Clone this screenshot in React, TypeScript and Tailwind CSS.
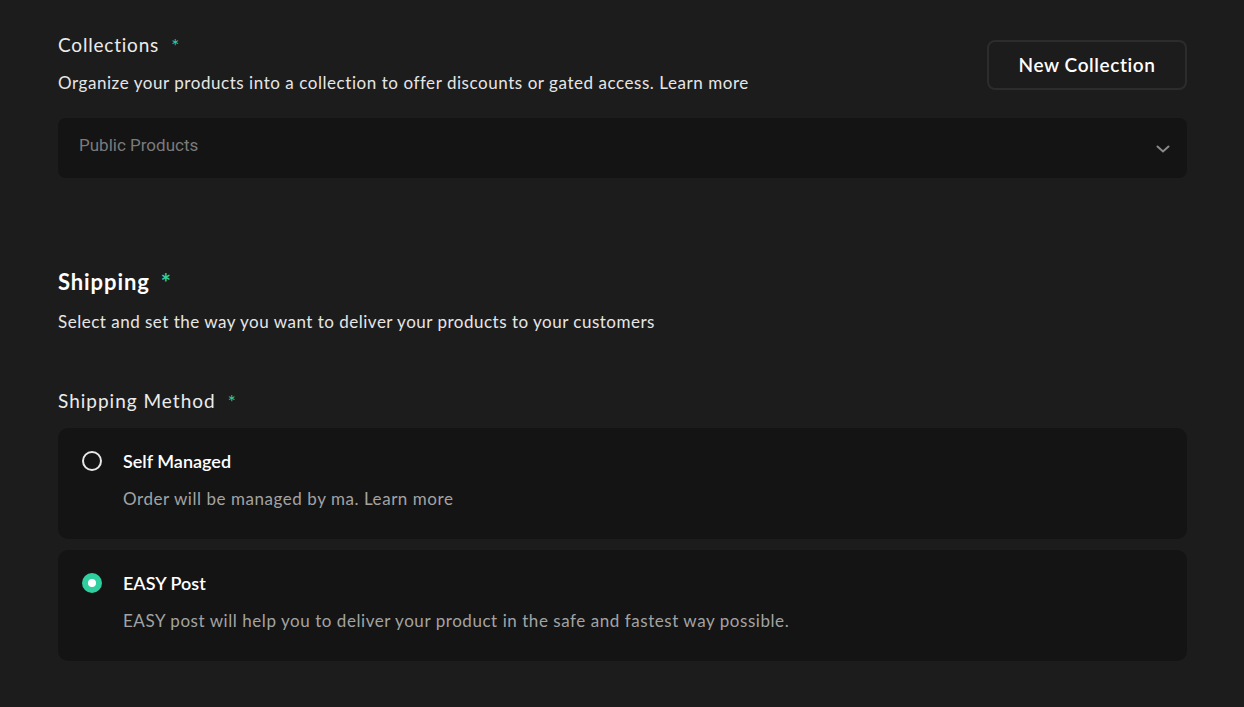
import React from "react";

const Star = ({ big }: { big?: boolean }) => (
  <span
    className={`text-[#2fcf9f] ${big ? "text-[24px] font-bold ml-[11px] top-[2px]" : "text-[19px] ml-[12px] top-[1px]"} relative`}
  >
    *
  </span>
);

function Option({ selected, title, desc }: { selected?: boolean; title: string; desc: string }) {
  return (
    <div className="bg-[#141414] rounded-[10px] h-[111px] flex flex-col pl-[24px] pt-[21px]">
      <div className="flex items-center h-[24px]">
        {selected ? (
          <div className="w-[20px] h-[20px] rounded-full bg-[#2fcf9f] flex items-center justify-center">
            <div className="w-[8px] h-[8px] rounded-full bg-white" />
          </div>
        ) : (
          <div className="w-[20px] h-[20px] rounded-full border-2 border-[#e8e8e8]" />
        )}
        <span className="ml-[21px] text-[18px] font-semibold text-white">{title}</span>
      </div>
      <div className="ml-[41px] mt-[13px] text-[17px] text-[#a3a3a3] tracking-[0.55px]">{desc}</div>
    </div>
  );
}

export default function App() {
  return (
    <div
      className="w-[1244px] h-[707px] bg-[#1c1c1c] text-[#ececec] overflow-hidden pl-[58px] pr-[57px] pt-[32px]"
      style={{ fontFamily: "Lato, 'Noto Sans', sans-serif" }}
    >
      <div className="flex justify-between">
        <div>
          <div className="text-[19px] leading-[26px] text-[#ececec] tracking-[0.8px]">
            Collections<Star />
          </div>
          <div className="mt-[13px] text-[17px] leading-[24px] text-[#e6e6e6] tracking-[0.55px]">
            Organize your products into a collection to offer discounts or gated access. Learn more
          </div>
        </div>
        <button className="mt-[8px] w-[200px] h-[50px] rounded-[8px] border-2 border-[#2c2c2c] text-[19px] font-semibold text-white tracking-[0.6px]">
          New Collection
        </button>
      </div>
      <div className="mt-[23px] h-[60px] bg-[#141414] rounded-[8px] flex items-center justify-between pl-[21px] pr-[16px]">
        <span className="text-[17px] text-[#7b7b7b] -mt-[5px]" style={{ fontFamily: "Roboto, sans-serif" }}>
          Public Products
        </span>
        <svg width="16" height="16" viewBox="0 0 16 16" fill="none" className="mt-[2px]">
          <path d="M2.5 5.5 L8 10.5 L13.5 5.5" stroke="#8a8a8a" strokeWidth="2" strokeLinecap="round" />
        </svg>
      </div>

      <div className="mt-[88px] text-[22px] leading-[30px] font-bold text-white tracking-[0.9px]">
        Shipping<Star big />
      </div>
      <div className="mt-[13px] text-[17px] leading-[24px] text-[#e6e6e6] tracking-[0.5px]">
        Select and set the way you want to deliver your products to your customers
      </div>

      <div className="mt-[54px] text-[19px] leading-[26px] text-[#ececec] tracking-[1px]">
        Shipping Method<Star />
      </div>
      <div className="mt-[14px] flex flex-col gap-[11px]">
        <Option title="Self Managed" desc="Order will be managed by ma. Learn more" />
        <Option selected title="EASY Post" desc="EASY post will help you to deliver your product in the safe and fastest way possible." />
      </div>
    </div>
  );
}
